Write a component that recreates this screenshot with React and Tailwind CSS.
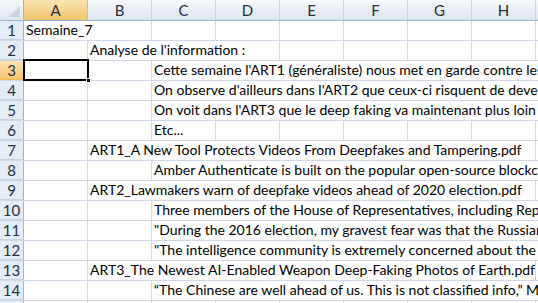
import React from "react";

const COLS = ["A", "B", "C", "D", "E", "F", "G", "H"];

const rows = [
  { n: 1, segs: [{ span: 2, text: "Semaine_7" }, 1, 1, 1, 1, 1, 1] },
  { n: 2, segs: [1, { span: 3, text: "Analyse de l'information :" }, 1, 1, 1, 1] },
  { n: 3, segs: [1, 1, { span: 7, text: "Cette semaine l'ART1 (généraliste) nous met en garde contre les dangers" }] },
  { n: 4, segs: [1, 1, { span: 7, text: "On observe d'ailleurs dans l'ART2 que ceux-ci risquent de devenir" }] },
  { n: 5, segs: [1, 1, { span: 7, text: "On voit dans l'ART3 que le deep faking va maintenant plus loin" }] },
  { n: 6, segs: [1, 1, { span: 1, text: "Etc..." }, 1, 1, 1, 1, 1] },
  { n: 7, segs: [1, { span: 7, text: "ART1_A New Tool Protects Videos From Deepfakes and Tampering.pdf" }] },
  { n: 8, segs: [1, 1, { span: 7, text: "Amber Authenticate is built on the popular open-source blockchain" }] },
  { n: 9, segs: [1, { span: 7, text: "ART2_Lawmakers warn of deepfake videos ahead of 2020 election.pdf" }] },
  { n: 10, segs: [1, 1, { span: 7, text: "Three members of the House of Representatives, including Rep. Adam" }] },
  { n: 11, segs: [1, 1, { span: 7, text: "\"During the 2016 election, my gravest fear was that the Russians would" }] },
  { n: 12, segs: [1, 1, { span: 7, text: "\"The intelligence community is extremely concerned about the" }] },
  { n: 13, segs: [1, { span: 7, text: "ART3_The Newest AI-Enabled Weapon Deep-Faking Photos of Earth.pdf" }] },
  { n: 14, segs: [1, 1, { span: 7, text: "“The Chinese are well ahead of us. This is not classified info,” Mr." }] },
  { n: 15, segs: [1, 1, 1, 1, 1, 1, 1, 1] },
];

function Cell({ span, text, selected }) {
  const w = span * 64;
  return (
    <div
      className="relative shrink-0 h-full border-r border-[#d0d7e5] flex items-end overflow-visible"
      style={{ width: w }}
    >
      {text ? (
        <span className="whitespace-nowrap overflow-hidden block w-full pl-[2px] pb-[1px] leading-[18px] text-black">
          {text}
        </span>
      ) : null}
      {selected ? (
        <div className="absolute left-[-1px] top-[-2px] w-[66px] h-[22px] border-[2px] border-black z-10 pointer-events-none">
          <div className="absolute right-[-4px] bottom-[-4px] w-[5px] h-[5px] bg-black border border-white" />
        </div>
      ) : null}
    </div>
  );
}

export default function App() {
  return (
    <div className="w-[538px] h-[303px] overflow-hidden bg-white font-['Lato',sans-serif] text-[14px]">
      <div className="flex h-[21px] border-b border-[#9eb6ce] text-[15px]">
        <div className="relative w-[24px] shrink-0 h-full border-r border-[#9eb6ce] bg-gradient-to-b from-[#f7f9fb] to-[#e0e7ef]">
          <div className="absolute right-[3px] bottom-[3px] w-0 h-0 border-l-[11px] border-l-transparent border-b-[11px] border-b-[#c9d4e0]" />
        </div>
        {COLS.map((c) => (
          <div
            key={c}
            className={
              "w-[64px] shrink-0 h-full border-r flex items-center justify-center text-[#27303f] " +
              (c === "A"
                ? "bg-gradient-to-b from-[#fbe3b4] to-[#f2c46a] border-[#f1b94d]"
                : "bg-gradient-to-b from-[#f7f9fb] to-[#dce4ee] border-[#c5d2e0]")
            }
          >
            {c}
          </div>
        ))}
        <div className="flex-1 h-full bg-gradient-to-b from-[#f7f9fb] to-[#dce4ee]" />
      </div>
      {rows.map((r) => {
        let colIdx = 0;
        return (
          <div key={r.n} className="flex h-[20px] border-b border-[#d0d7e5]">
            <div
              className={
                "w-[24px] shrink-0 h-full border-r border-[#9eb6ce] flex items-center justify-center text-[15px] text-[#27303f] " +
                (r.n === 3
                  ? "bg-gradient-to-b from-[#fbe3b4] to-[#f2c46a] border-b border-b-[#f1b94d]"
                  : "bg-[#e4ecf7] border-b border-b-[#c5d2e0]")
              }
            >
              {r.n}
            </div>
            {r.segs.map((s, i) => {
              const seg = typeof s === "number" ? { span: s } : s;
              const start = colIdx;
              colIdx += seg.span;
              return (
                <Cell
                  key={i}
                  span={seg.span}
                  text={seg.text}
                  selected={r.n === 3 && start === 0}
                />
              );
            })}
            <div className="flex-1 h-full" />
          </div>
        );
      })}
    </div>
  );
}
